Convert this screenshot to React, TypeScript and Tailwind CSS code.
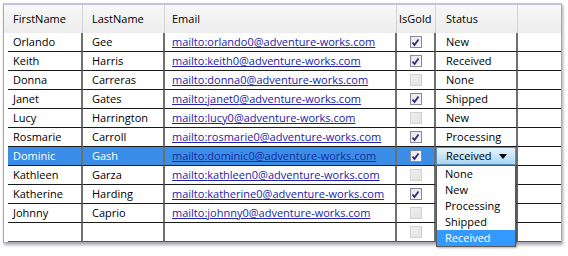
type Row = { first: string; last: string; mail: string; gold: boolean; status: string };

const rows: Row[] = [
  { first: "Orlando", last: "Gee", mail: "orlando0", gold: true, status: "New" },
  { first: "Keith", last: "Harris", mail: "keith0", gold: true, status: "Received" },
  { first: "Donna", last: "Carreras", mail: "donna0", gold: false, status: "None" },
  { first: "Janet", last: "Gates", mail: "janet0", gold: true, status: "Shipped" },
  { first: "Lucy", last: "Harrington", mail: "lucy0", gold: false, status: "New" },
  { first: "Rosmarie", last: "Carroll", mail: "rosmarie0", gold: true, status: "Processing" },
  { first: "Dominic", last: "Gash", mail: "dominic0", gold: true, status: "Received" },
  { first: "Kathleen", last: "Garza", mail: "kathleen0", gold: false, status: "" },
  { first: "Katherine", last: "Harding", mail: "katherine0", gold: true, status: "" },
  { first: "Johnny", last: "Caprio", mail: "johnny0", gold: false, status: "" },
];

const options = ["None", "New", "Processing", "Shipped", "Received"];

function CheckBox({ checked }: { checked: boolean }) {
  if (!checked) {
    return <div className="w-[12px] h-[12px] border border-[#d2d2d2] bg-gradient-to-br from-[#f0f0f0] to-[#e2e2e2]" />;
  }
  return (
    <div className="w-[12px] h-[12px] border border-[#8a8a96] bg-gradient-to-br from-[#e6e6ee] to-[#f8f8fc] flex items-center justify-center">
      <svg width="9" height="9" viewBox="0 0 9 9">
        <path d="M1.5 4.5 L3.5 7 L7.5 1.5" fill="none" stroke="#2e2a78" strokeWidth="1.8" />
      </svg>
    </div>
  );
}

function Combo() {
  return (
    <div className="relative h-full">
      <div className="h-full flex items-center justify-between pl-[9px] pr-[8px] border border-[#5c8fbf] bg-gradient-to-b from-[#e6f3fc] to-[#a9d7f4] text-black">
        <span>Received</span>
        <svg width="8" height="5" viewBox="0 0 8 5">
          <path d="M0 0 H8 L4 5 Z" fill="#000" />
        </svg>
      </div>
      <div className="absolute z-10 left-0 top-full w-[80px] bg-white border border-[#5a5a5a] shadow-[1px_1px_2px_rgba(0,0,0,0.3)]">
        {options.map((o) => (
          <div
            key={o}
            className={
              o === "Received"
                ? "h-[16px] leading-[16px] pl-[8px] bg-[#3399ff] text-white"
                : "h-[16px] leading-[16px] pl-[8px] text-black"
            }
          >
            {o}
          </div>
        ))}
      </div>
    </div>
  );
}

export default function App() {
  return (
    <div className="w-[568px] h-[256px] bg-white pt-[3px] pl-[3px] font-['Segoe_UI','Open_Sans',sans-serif] text-[11px] text-black">
      <div className="w-[559px] border border-[#a8a8b8] border-t-2 border-t-[#c4c4e0] shadow-[1px_2px_3px_rgba(0,0,0,0.35)] bg-white">
        {/* Header */}
        <div className="flex h-[28px] bg-gradient-to-b from-[#f8f8f8] to-[#ececec]">
          <div className="w-[4px]" />
          <div className="w-[75px] flex items-center pl-[5px] border-r border-[#d4d4d4]">FirstName</div>
          <div className="w-[82px] flex items-center pl-[9px] border-r border-[#d4d4d4]">LastName</div>
          <div className="w-[232px] flex items-center pl-[7px] border-r border-[#d4d4d4]">Email</div>
          <div className="w-[39px] flex items-center pl-[2px] border-r border-[#d4d4d4]">IsGold</div>
          <div className="w-[82px] flex items-center pl-[10px] border-r border-[#d4d4d4]">Status</div>
          <div className="flex-1" />
        </div>

        {/* Body */}
        {rows.map((r) => {
          const sel = r.first === "Dominic";
          const cell = sel ? "bg-[#3b8ee8] text-white" : "";
          return (
            <div key={r.first} className="flex h-[19px]">
              <div className="w-[4px]" />
              <div className={`w-[75px] flex items-center pl-[5px] border-r-2 border-r-[#6e6e6e] border-b border-b-[#1a1a1a] ${cell}`}>
                {r.first}
              </div>
              <div className={`w-[82px] flex items-center pl-[9px] border-r-2 border-r-[#6e6e6e] border-b border-b-[#1a1a1a] ${cell}`}>
                {r.last}
              </div>
              <div className={`w-[232px] flex items-center pl-[7px] border-r-2 border-r-[#6e6e6e] border-b border-b-[#1a1a1a] ${cell}`}>
                <a className={sel ? "underline text-[#1c2a9c]" : "underline text-[#2323a8]"}>
                  mailto:{r.mail}@adventure-works.com
                </a>
              </div>
              <div className={`w-[39px] flex items-center justify-center border-r-2 border-r-[#6e6e6e] border-b border-b-[#1a1a1a] ${cell}`}>
                <CheckBox checked={r.gold} />
              </div>
              <div className="w-[82px] border-r-2 border-r-[#6e6e6e] border-b border-b-[#1a1a1a]">
                {sel ? <Combo /> : <div className="h-full flex items-center pl-[10px]">{r.status}</div>}
              </div>
              <div className="flex-1 border-b border-b-[#1a1a1a]" />
            </div>
          );
        })}

        {/* New-item row */}
        <div className="flex h-[19px]">
          <div className="w-[4px]" />
          <div className="w-[75px] border-r-2 border-r-[#6e6e6e] border-b border-b-[#555]" />
          <div className="w-[82px] border-r-2 border-r-[#6e6e6e] border-b border-b-[#555]" />
          <div className="w-[232px] border-r-2 border-r-[#6e6e6e] border-b border-b-[#555]" />
          <div className="w-[39px] flex items-center justify-center border-r-2 border-r-[#6e6e6e] border-b border-b-[#555]">
            <CheckBox checked={false} />
          </div>
          <div className="w-[82px] border-r-2 border-r-[#6e6e6e] border-b border-b-[#555]" />
          <div className="flex-1 border-b border-b-[#555]" />
        </div>
      </div>
    </div>
  );
}
